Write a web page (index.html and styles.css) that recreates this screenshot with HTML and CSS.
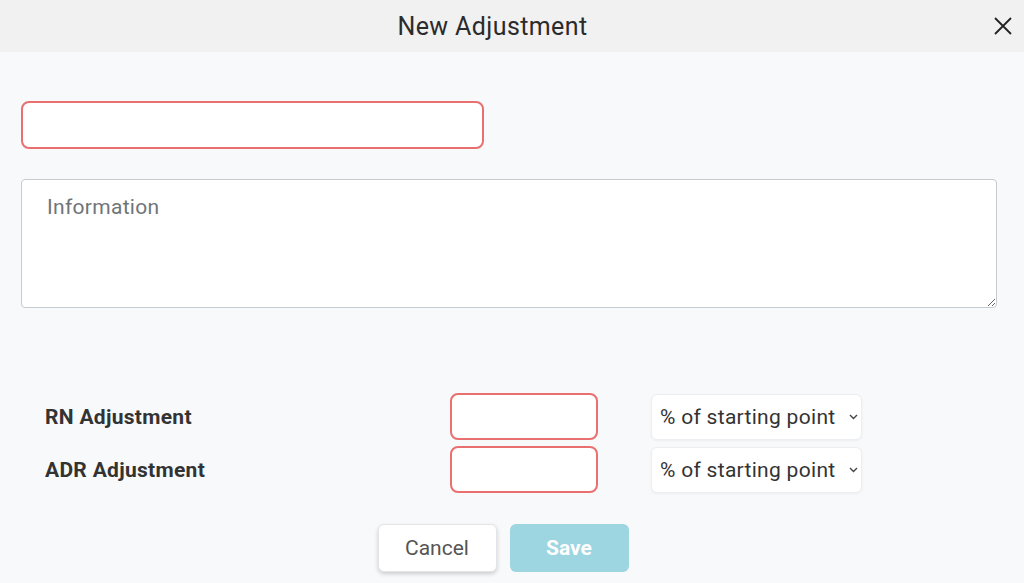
FILE: index.html
```html
<!DOCTYPE html>
<html lang="en">

<head>
    <meta charset="UTF-8">
    <meta name="viewport" content="width=device-width, initial-scale=1.0">
    <title>New Adjustment</title>
    <link rel="stylesheet" href="styles.css">
</head>

<body>
    <div class="modal">
        <div class="modal-header">
            <h1>New Adjustment</h1>
            <button class="close" aria-label="Close">
                <svg width="20" height="20" viewBox="0 0 20 20">
                    <path d="M2 2 L18 18 M18 2 L2 18" stroke="#222" stroke-width="1.8" fill="none" />
                </svg>
            </button>
        </div>

        <div class="modal-body">
            <input class="name-input" type="text">

            <textarea class="info" placeholder="Information"></textarea>

            <div class="adjustments">
                <div class="adj-row">
                    <label>RN Adjustment</label>
                    <input class="value-input" type="text">
                    <div class="select-wrap">
                        <select>
                            <option>% of starting point</option>
                        </select>
                        <svg class="chevron" width="9" height="6" viewBox="0 0 9 6">
                            <path d="M1 1 L4.5 4.5 L8 1" stroke="#444" stroke-width="1.4" fill="none" />
                        </svg>
                    </div>
                </div>
                <div class="adj-row">
                    <label>ADR Adjustment</label>
                    <input class="value-input" type="text">
                    <div class="select-wrap">
                        <select>
                            <option>% of starting point</option>
                        </select>
                        <svg class="chevron" width="9" height="6" viewBox="0 0 9 6">
                            <path d="M1 1 L4.5 4.5 L8 1" stroke="#444" stroke-width="1.4" fill="none" />
                        </svg>
                    </div>
                </div>
            </div>

            <div class="actions">
                <button class="btn btn-cancel">Cancel</button>
                <button class="btn btn-save" disabled>Save</button>
            </div>
        </div>
    </div>
</body>

</html>
```

FILE: styles.css
```css
body {
    margin: 0;
    font-family: Roboto, "Liberation Sans", sans-serif;
    background: #f8f9fb;
    color: #333;
}

.modal {
    width: 1024px;
    height: 583px;
    overflow: hidden;
}

.modal-header {
    height: 52px;
    background: #f1f1f1;
    display: flex;
    align-items: center;
}

.modal-header h1 {
    flex: 1;
    margin: 0;
    text-align: center;
    font-size: 25px;
    font-weight: 400;
    letter-spacing: 0.4px;
    color: #2b2b2b;
}

.close {
    width: 36px;
    height: 36px;
    margin-right: 3px;
    display: flex;
    align-items: center;
    justify-content: center;
    background: none;
    border: none;
    padding: 0;
    cursor: pointer;
}

.modal-body {
    padding: 49px 27px 0 21px;
}

input,
textarea,
select {
    font-family: inherit;
    box-sizing: border-box;
}

.name-input {
    display: block;
    width: 463px;
    height: 48px;
    background: #fff;
    border: 2px solid #ea6f6f;
    border-radius: 8px;
    outline: none;
}

.info {
    display: block;
    margin-top: 30px;
    width: 976px;
    height: 129px;
    padding: 15px 25px;
    font-size: 21px;
    letter-spacing: 0.3px;
    background: #fff;
    border: 1px solid #c6cbd0;
    border-radius: 4px;
    outline: none;
}

.info::placeholder {
    color: #6f7479;
}

.adjustments {
    margin-top: 85px;
    display: flex;
    flex-direction: column;
    gap: 6px;
}

.adj-row {
    display: flex;
    align-items: center;
}

.adj-row label {
    width: 405px;
    padding-left: 24px;
    font-size: 21px;
    font-weight: 700;
    letter-spacing: 0.3px;
    color: #333;
}

.value-input {
    width: 148px;
    height: 47px;
    background: #fff;
    border: 2px solid #ea6f6f;
    border-radius: 8px;
    outline: none;
}

.select-wrap {
    position: relative;
    margin-left: 53px;
}

.select-wrap select {
    appearance: none;
    width: 211px;
    height: 46px;
    padding: 0 0 0 8px;
    font-size: 21px;
    letter-spacing: 0.3px;
    color: #333;
    background: #fff;
    border: 1px solid #eceef1;
    border-radius: 6px;
    box-shadow: 0 1px 3px rgba(0, 0, 0, 0.05);
    outline: none;
}

.chevron {
    position: absolute;
    right: 4px;
    top: 20px;
    pointer-events: none;
}

.actions {
    margin-top: 31px;
    display: flex;
    justify-content: center;
    gap: 13px;
    padding-right: 12px;
}

.btn {
    width: 119px;
    height: 48px;
    font-family: inherit;
    font-size: 21px;
    border-radius: 6px;
    cursor: pointer;
}

.btn-cancel {
    background: #fff;
    color: #555;
    border: 1px solid #e3e5e8;
    box-shadow: 0 2px 4px rgba(0, 0, 0, 0.18);
}

.btn-save {
    background: #9dd5e0;
    color: #fff;
    font-weight: 700;
    border: none;
}
```
